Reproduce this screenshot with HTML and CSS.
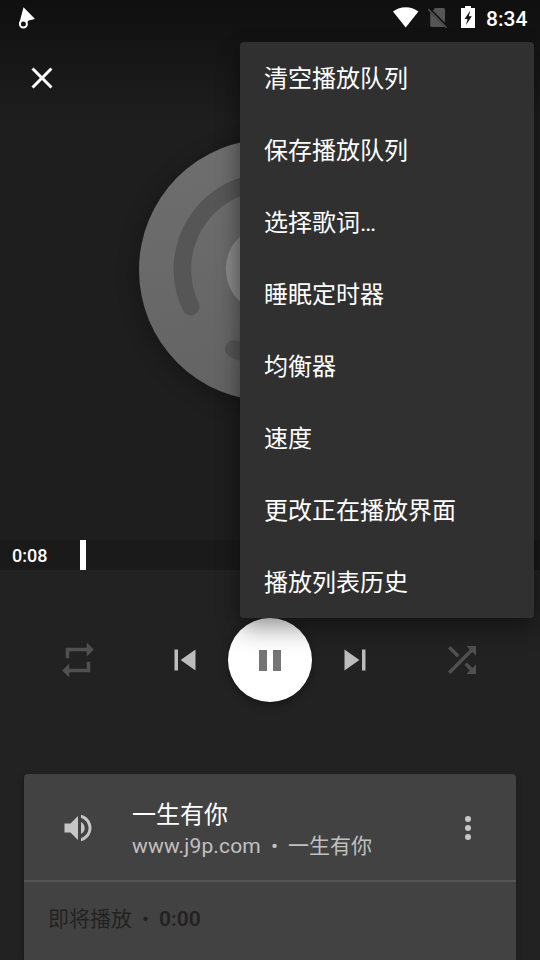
FILE: index.html
```html
<!DOCTYPE html>
<html lang="zh-CN">
<head>
<meta charset="utf-8">
<title>正在播放</title>
<link rel="stylesheet" href="styles.css">
</head>
<body>
<main class="player">
  <section class="artwork">
    <header class="status">
      <svg class="cursor" width="18" height="24" viewBox="0 0 18 24"><path d="M5.5 1.3 17 13 10.5 14.5 5 22 1.1 18Z" fill="#fff"/><circle cx="5.4" cy="18" r="3.5" fill="#111" stroke="#fff" stroke-width="2"/></svg>
      <div class="status-icons">
        <svg width="26" height="21" viewBox="0 0 26 21"><path d="M0 4.6C7.2-1.2 18.2-1.2 25.4 4.6L12.7 20.6Z" fill="#fff"/></svg>
        <svg width="20" height="22" viewBox="0 0 20 22"><path d="M7 1H15.5Q17 1 17 2.5V17L4.2 4.2Z" fill="#555"/><path d="M2.2 5.5 16.5 19.8Q16 20 15.5 20H3.7Q2.2 20 2.2 18.5Z" fill="#555"/><path d="M1.2 1 19.2 19" stroke="#111" stroke-width="1.6"/><path d="M.3 2.2 18.5 20.7" stroke="#555" stroke-width="1.6"/></svg>
        <svg class="battery" width="14" height="22" viewBox="0 0 14 22"><path d="M4 0H10V2H14V22H0V2H4Z" fill="#fff"/><path d="M9.3 4.5 3.6 13H6.6L5 19 10.8 10.2H7.8Z" fill="#111"/></svg>
        <span class="clock">8:34</span>
      </div>
    </header>
    <svg class="close" width="36" height="36" viewBox="0 0 24 24"><path d="M19 6.41 17.59 5 12 10.59 6.41 5 5 6.41 10.59 12 5 17.59 6.41 19 12 13.41 17.59 19 19 17.59 13.41 12Z"/></svg>
    <div class="disc">
      <svg width="262" height="262" viewBox="-131 -131 262 262" fill="none" stroke="#565656" stroke-width="17.5" stroke-linecap="round">
        <path d="M-79.3 36.5A87.3 87.3 0 0 1 79.3-38"/>
        <path d="M-36.2 79A87.5 87.5 0 0 0 87.5-1"/>
        <circle cy="-1" r="44.2" fill="#888" stroke="none"/>
      </svg>
    </div>
    <div class="progress"><span>0:08</span><i class="thumb"></i></div>
  </section>
  <nav class="controls">
    <svg class="dim" width="42" height="42" viewBox="0 0 24 24"><path d="M17 17H7V14L3 18 7 22V19H19V13H17ZM7 7H17V10L21 6 17 2V5H5V11H7Z"/></svg>
    <div class="transport">
      <svg class="skip" width="42" height="42" viewBox="0 0 24 24"><path d="M6 6H8V18H6ZM9.5 12 18 18V6Z"/></svg>
      <button class="pause"><svg width="22" height="21" viewBox="0 0 22 21"><path d="M0 0H8V21H0ZM14 0H22V21H14Z"/></svg></button>
      <svg class="skip" width="42" height="42" viewBox="0 0 24 24"><path d="M6 18 14.5 12 6 6ZM16 6V18H18V6Z"/></svg>
    </div>
    <svg class="dim" width="42" height="42" viewBox="0 0 24 24"><path d="M10.59 9.17 5.41 4 4 5.41 9.17 10.58ZM14.5 4 16.54 6.04 4 18.59 5.41 20 17.96 7.46 20 9.5V4ZM14.83 13.41 13.42 14.82 16.55 17.95 14.5 20H20V14.5L17.96 16.54Z"/></svg>
  </nav>
  <section class="queue">
    <div class="track">
      <svg width="36" height="36" viewBox="0 0 24 24"><path d="M3 9V15H7L12 20V4L7 9ZM16.5 12C16.5 10.23 15.48 8.71 14 7.97V16.02C15.48 15.29 16.5 13.77 16.5 12ZM14 3.23V5.29C16.89 6.15 19 8.83 19 12S16.89 17.85 14 18.71V20.77C18.01 19.86 21 16.28 21 12S18.01 4.14 14 3.23Z"/></svg>
      <div class="names">
        <div class="title">一生有你</div>
        <div class="artist"><span class="site">www.j9p.com</span><span class="dot">•</span>一生有你</div>
      </div>
      <svg width="36" height="36" viewBox="0 0 24 24"><circle cx="12" cy="6" r="2"/><circle cx="12" cy="12" r="2"/><circle cx="12" cy="18" r="2"/></svg>
    </div>
    <div class="upnext">即将播放<span class="dot">•</span><b>0:00</b></div>
  </section>
  <ul class="menu">
    <li>清空播放队列</li>
    <li>保存播放队列</li>
    <li>选择歌词…</li>
    <li>睡眠定时器</li>
    <li>均衡器</li>
    <li>速度</li>
    <li>更改正在播放界面</li>
    <li>播放列表历史</li>
  </ul>
</main>
</body>
</html>
```
FILE: styles.css
```css
* { box-sizing: border-box; }
body { margin: 0; background: #222; font-family: Roboto, "Noto Sans CJK SC", sans-serif; color: #fff; }
svg { display: block; flex: none; }
.player { position: relative; width: 540px; height: 960px; overflow: hidden; display: flex; flex-direction: column; }
.player > * { flex: none; }
.artwork { height: 570px; display: flex; flex-direction: column; background: linear-gradient(#0f0f0f 0, #1e1e1e 120px); }
.status { height: 36px; display: flex; justify-content: space-between; padding: 0 12px 0 18px; }
.cursor { margin-top: 6px; }
.status-icons { display: flex; padding-top: 7px; }
.status-icons svg + svg { margin-left: 9px; }
.status-icons .battery { margin: -1px 0 0 13px; }
.clock { width: 42px; margin-left: 11px; font-size: 21px; font-weight: 500; line-height: 24px; white-space: nowrap; }
.close { margin: 24px 0 0 24px; fill: #fff; }
.disc { width: 262px; height: 262px; margin: 43px 0 0 139px; border-radius: 50%; background: linear-gradient(165deg, #6f6f6f, #616161); box-shadow: 0 5px 22px rgba(0,0,0,.3); }
.progress { height: 30px; margin-top: auto; padding-left: 12px; display: flex; background: #1a1a1a; font-size: 18px; font-weight: 500; line-height: 31px; }
.progress span { width: 68px; }
.thumb { width: 6px; background: #fff; }
.controls { height: 84px; margin: 48px 57px 0; display: flex; align-items: center; justify-content: space-between; }
.transport { display: flex; align-items: center; gap: 22px; }
.dim { fill: #505050; }
.skip { fill: #bcbcbc; }
.pause { width: 84px; height: 84px; border: 0; border-radius: 50%; padding: 1px 0 0; display: flex; align-items: center; justify-content: center; background: #fff; box-shadow: 0 3px 8px rgba(0,0,0,.35); }
.pause svg { fill: #757575; }
.queue { margin: 72px 24px 0; height: 186px; border-radius: 4px 4px 0 0; background: #424242; box-shadow: 0 2px 5px rgba(0,0,0,.35); }
.track { height: 108px; padding: 0 30px 0 36px; display: flex; align-items: center; border-bottom: 2px solid #555; fill: #c6c6c6; }
.track > svg { margin-top: 2px; }
.names { flex: 1; margin-left: 36px; padding-top: 4px; }
.title { font-size: 24px; line-height: 34px; }
.artist { font-size: 21px; line-height: 28px; color: #c0c0c0; display: flex; }
.site { letter-spacing: .16px; }
.dot { display: inline-block; width: 27px; text-align: center; }
.upnext { padding: 20px 24px; font-size: 21px; line-height: 34px; color: #222; }
.upnext b { font-weight: 600; }
.menu { position: absolute; left: 240px; top: 42px; width: 294px; height: 576px; margin: 0; padding: 0; list-style: none; border-radius: 4px; background: #303030; box-shadow: 0 12px 24px rgba(0,0,0,.32), 0 0 18px rgba(0,0,0,.2); }
.menu li { height: 72px; padding-left: 24px; font-size: 24px; line-height: 74px; }
```
